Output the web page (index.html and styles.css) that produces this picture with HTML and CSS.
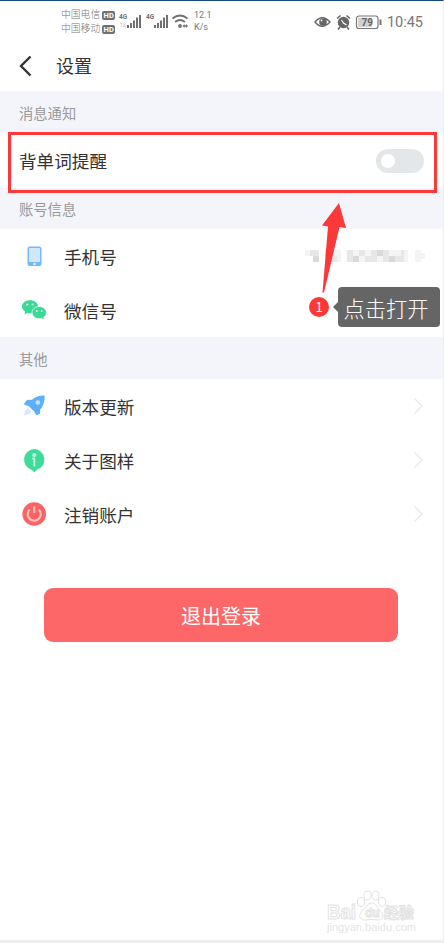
FILE: index.html
```html
<!DOCTYPE html>
<html lang="zh-CN">
<head>
<meta charset="utf-8">
<title>设置</title>
<link rel="stylesheet" href="styles.css">
</head>
<body>
<div class="screen">
  <div class="status">
    <div class="carriers">
      <div class="carrier">中国电信<span class="hd">HD</span></div>
      <div class="carrier">中国移动<span class="hd">HD</span></div>
    </div>
    <svg class="signals" width="72" height="20" viewBox="0 0 72 20">
      <g class="ink">
        <path d="M8 14h2v3H8zM11 12h2v5h-2zM14 9.500h2v7.500h-2zM17 6.500h2v10.500h-2zM20 4h2v13h-2z"/>
        <path d="M35 14h2v3h-2zM38 12h2v5h-2zM41 9.500h2v7.500h-2zM44 6.500h2v10.500h-2zM47 4h2v13h-2z"/>
        <circle cx="61" cy="15" r="1.900"/>
        <path d="M63.500 15l2-2v1.200h1.500V13l2 2-2 2v-1.200h-1.500V17z"/>
      </g>
      <path class="line" d="M53.500 7.500q7.500-6 15 0M56 11q5-4 10 0" />
      <text x="0" y="8" class="gen">4G</text>
      <text x="27" y="8" class="gen">4G</text>
      <text x="1" y="16" class="sub">1X</text>
    </svg>
    <div class="speed"><span>12.1</span><span>K/s</span></div>
    <svg class="indicators" width="70" height="18" viewBox="0 0 70 18">
      <path d="M1 9q7-8.500 15 0q-8 8.500-15 0z" fill="none" stroke="#666" stroke-width="1.400"/>
      <circle cx="9" cy="9" r="3.800" fill="#666"/><circle cx="7.500" cy="7.500" r="1" fill="#fff"/>
      <circle cx="29.500" cy="9.500" r="5.700" fill="#666"/>
      <path d="M23 5.500l3.500-3M36 5.500l-3.500-3M26 14l-2 2.500M33 14l2 2.500" stroke="#666" stroke-width="1.600"/>
      <path d="M27.500 7l2 3 3 2" fill="none" stroke="#fff" stroke-width="1.200"/>
      <rect x="42.500" y="3" width="21.500" height="12.500" rx="2.500" fill="#fff" stroke="#777" stroke-width="1.200"/>
      <rect x="44.200" y="4.700" width="14" height="9.200" fill="#d0d0d0"/>
      <path d="M66.500 6.500v5.500" stroke="#777" stroke-width="2"/>
      <text x="53.200" y="13" text-anchor="middle" class="charge">79</text>
    </svg>
    <span class="clock">10:45</span>
  </div>

  <header class="nav">
    <svg width="13" height="22" viewBox="0 0 13 22"><path d="M11.500 1.500L2 11l9.500 9.500" fill="none" stroke="#333" stroke-width="2.400"/></svg>
    <h1>设置</h1>
  </header>

  <h2 class="section">消息通知</h2>
  <div class="row reminder"><span class="label">背单词提醒</span><span class="toggle"></span></div>

  <h2 class="section account">账号信息</h2>
  <div class="row">
    <svg class="icon" width="26" height="26" viewBox="0 0 26 26">
      <rect x="6.500" y="3.500" width="14" height="19.500" rx="2.500" fill="#70b9fb"/>
      <rect x="8" y="5" width="11" height="14" rx=".8" fill="#cfe8ff"/>
      <circle cx="13.500" cy="21" r="1.200" fill="#e9f5ff"/>
    </svg>
    <span class="label">手机号</span>
    <svg class="mosaic" width="124" height="18" viewBox="0 0 124 18">
      <path fill="#f4f4f4" d="M2 3h14v6H2zM10 9h6v6h-6zM28 3h10v12H28zM50 3h55v12H50zM112 3h6v12h-6zM118 6h4v6h-4z"/>
      <path fill="#e7e7e7" d="M7 3h9v6H7zM22 3h6v6h-6zM28 9h6v6h-6zM44 3h6v12h-6zM56 3h6v6h-6zM62 9h6v6h-6zM68 3h6v12h-6zM80 3h6v12h-6zM92 9h6v6h-6zM98 3h3v12h-3z"/>
      <path fill="#dadada" d="M10 9h6v6h-6zM50 9h6v6h-6zM74 3h6v6h-6zM86 9h6v6h-6z"/>
    </svg>
  </div>
  <div class="row">
    <svg class="icon" width="26" height="26" viewBox="0 0 26 26">
      <path fill="#3bd897" d="M9 3.200c4.500 0 8 2.700 8 6.300s-3.500 6.900-8 6.900q-1.500 0-2.800-.4L3.600 17.500l.5-2.900C2.200 13.400 1 11.700 1 9.500c0-3.600 3.500-6.300 8-6.300z"/>
      <path fill="#3bd897" stroke="#fff" stroke-width=".7" d="M18.200 9.500c4 0 7.200 2.700 7.200 6.100 0 1.900-1.100 3.600-2.600 4.600l.6 2.700-2.700-1.400q-1.200.3-2.500.3c-4 0-7.100-2.700-7.100-6.200s3.100-6.100 7.100-6.100z"/>
      <g fill="#c5f7e1"><circle cx="6.200" cy="7.500" r="1.100"/><circle cx="11.600" cy="7.500" r="1.100"/><circle cx="15.800" cy="14" r="1"/><circle cx="20.700" cy="14" r="1"/></g>
    </svg>
    <span class="label">微信号</span>
  </div>

  <h2 class="section other">其他</h2>
  <div class="row">
    <svg class="icon" width="26" height="26" viewBox="0 0 26 26">
      <path fill="#5daffa" d="M23.600 2.600q.5 8.500-4.400 14l-.2 4.100-3.700 1.500-2.100-3.600-5.700-5.600-4.700-1.500 3-4.500 5.200-.3q5-4.300 12.600-4.100z"/>
      <circle cx="16.800" cy="9.500" r="2.300" fill="#c5e4ff"/>
      <path fill="#d5ecff" d="M7 15l3.500 3.500q-2 4-7.500 3.800 0-5 4-7.300z"/>
    </svg>
    <span class="label">版本更新</span>
    <svg class="chevron" width="11" height="18" viewBox="0 0 11 18"><path d="M1.500 1.500L9 9l-7.500 7.500"/></svg>
  </div>
  <div class="row">
    <svg class="icon" width="26" height="26" viewBox="0 0 26 26">
      <path fill="#3edb9b" d="M13.200 2A10.600 10.600 0 0 1 16 22.700L13.300 25.200 10.500 22.700A10.600 10.600 0 0 1 13.200 2z"/>
      <circle cx="13.300" cy="8" r="2.100" fill="#c5f7e1"/><path d="M11.300 11.500h2v8" fill="none" stroke="#c5f7e1" stroke-width="1.800"/>
    </svg>
    <span class="label">关于图样</span>
    <svg class="chevron" width="11" height="18" viewBox="0 0 11 18"><path d="M1.500 1.500L9 9l-7.500 7.500"/></svg>
  </div>
  <div class="row">
    <svg class="icon" width="26" height="26" viewBox="0 0 26 26">
      <circle cx="13.200" cy="13" r="11.800" fill="#fd6262"/>
      <path d="M8.700 8.500a6.500 6.500 0 1 0 9 0M13.200 5.500v6.500" fill="none" stroke="#ffc0c0" stroke-width="2.200"/>
    </svg>
    <span class="label">注销账户</span>
    <svg class="chevron" width="11" height="18" viewBox="0 0 11 18"><path d="M1.500 1.500L9 9l-7.500 7.500"/></svg>
  </div>

  <button class="logout">退出登录</button>

  <div class="highlight"></div>
  <svg class="arrow" width="26" height="94" viewBox="0 0 26 94"><path fill="#fc3838" d="M18 2L25 27l-6.500-1L3 91.500H1.500L7 25.500l-6-1z"/></svg>
  <div class="step">1</div>
  <div class="tip">点击打开</div>

  <svg class="watermark" width="94" height="48" viewBox="0 0 94 48">
    <g fill="#fff" stroke="#e2e2e2" stroke-width="1">
      <text class="bai" x="1" y="32" textLength="29" lengthAdjust="spacingAndGlyphs">Bai</text>
      <ellipse cx="35" cy="15" rx="3.500" ry="4.500"/><ellipse cx="41.500" cy="8.500" rx="3.500" ry="4.500"/><ellipse cx="49.500" cy="8.500" rx="3.500" ry="4.500"/><ellipse cx="56" cy="15" rx="3.500" ry="4.500"/>
      <path d="M45.500 16c5 0 6 5 9 8s4 9-2 9q-7-1-14 0c-6 0-6-6-2-9s4-8 9-8z"/>
      <text class="du" x="39" y="30">du</text><text class="exp" x="58" y="31">经验</text>
    </g>
    <text class="site" x="1" y="44" textLength="89" lengthAdjust="spacingAndGlyphs">jingyan.baidu.com</text>
  </svg>
</div>
</body>
</html>
```
FILE: styles.css
```css
* { box-sizing: border-box; }
body { margin: 0; background: #fff; color: #333; font-family: Roboto, "Noto Sans CJK SC", sans-serif; }
.screen { position: relative; width: 444px; height: 943px; overflow: hidden; border-top: 1px solid #174a7c; border-right: 1px solid #ececec; border-bottom: 3px solid #eee; }
.status { display: flex; height: 39px; padding: 6px 20px 0 61px; color: #777; }
.carriers { width: 58px; padding-top: 1px; }
.carrier { display: flex; align-items: center; height: 14px; gap: 2px; font-size: 9.800px; font-weight: 300; line-height: 14px; white-space: nowrap; }
.hd { width: 13px; height: 9px; border-radius: 2px; background: #707070; color: #fff; font-size: 7.500px; font-weight: 700; line-height: 9px; text-align: center; }
.signals { margin-top: 4px; }
.ink { fill: #707070; }
.line { fill: none; stroke: #707070; stroke-width: 1.700; }
.gen { font: 700 6.500px Roboto, sans-serif; fill: #707070; }
.sub { font: 5px Roboto, sans-serif; fill: #bbb; }
.speed { display: flex; flex-direction: column; width: 24px; margin-left: 3px; padding-top: 3px; font-size: 9px; line-height: 11.500px; }
.indicators { margin: 6px 0 0 auto; }
.charge { font: 700 10px Roboto, sans-serif; fill: #666; }
.clock { margin-left: 3px; padding-top: 6px; font-size: 14.500px; line-height: 20px; }
.nav { display: flex; align-items: center; height: 51px; gap: 24px; padding: 0 19px; }
h1 { margin: 0; padding-top: 2px; font-size: 18px; font-weight: 400; line-height: 28px; }
.section { height: 42px; margin: 0; padding: 2px 19px 0; background: #f4f5fa; color: #999; font-size: 14.300px; font-weight: 400; line-height: 42px; }
.account { height: 41px; padding-top: 1px; }
.other { height: 42px; }
.row { display: flex; align-items: center; height: 54px; padding: 0 19px 0 21px; font-size: 17.600px; line-height: 26px; }
.label { padding-top: 3px; }
.reminder { height: 55px; justify-content: space-between; padding-left: 19px; }
.toggle { width: 48px; height: 24px; border-radius: 12px; padding: 5px; background: #e3e7ea; }
.toggle::before { content: ""; display: block; width: 14px; height: 14px; border-radius: 50%; background: #fff; }
.icon { flex: none; margin-right: 17px; }
.chevron { margin: 0 0 0 auto; fill: none; stroke: #ececec; stroke-width: 1.700; }
.mosaic { margin-left: auto; margin-right: -3px; }
.logout { display: block; width: 354px; height: 54px; margin: 47px 0 0 44px; padding: 1px 0 0; border: 0; border-radius: 9px; background: #fe6767; color: #fff; font: 20px "Noto Sans CJK SC", sans-serif; }
.highlight { position: absolute; left: 8px; top: 131px; width: 429px; height: 61px; border: 3px solid #fc3838; }
.arrow { position: absolute; left: 321px; top: 200px; }
.step { position: absolute; left: 309px; top: 296px; width: 20px; height: 20px; border-radius: 50%; background: #fc3838; color: #fff; font: 13px/20px "Noto Sans CJK SC", sans-serif; text-align: center; }
.tip { position: absolute; left: 338px; top: 286px; width: 102px; height: 40px; border-radius: 4px; background: #656565; color: #fff; font: 300 21.300px/41px "Noto Sans CJK SC", sans-serif; text-align: center; padding-right: 6px; white-space: nowrap; }
.tip::before { content: ""; position: absolute; left: -5px; top: 15px; border: 5px solid transparent; border-left: 0; border-right-color: #656565; }
.watermark { position: absolute; left: 326px; top: 886px; }
.bai { font: 700 20px "Liberation Sans", sans-serif; }
.du { font: 700 12px "Liberation Sans", sans-serif; }
.exp { font: 700 15px "Noto Sans CJK SC", sans-serif; }
.site { font: 11px "Liberation Sans", sans-serif; fill: #e5e5e5; }
```
